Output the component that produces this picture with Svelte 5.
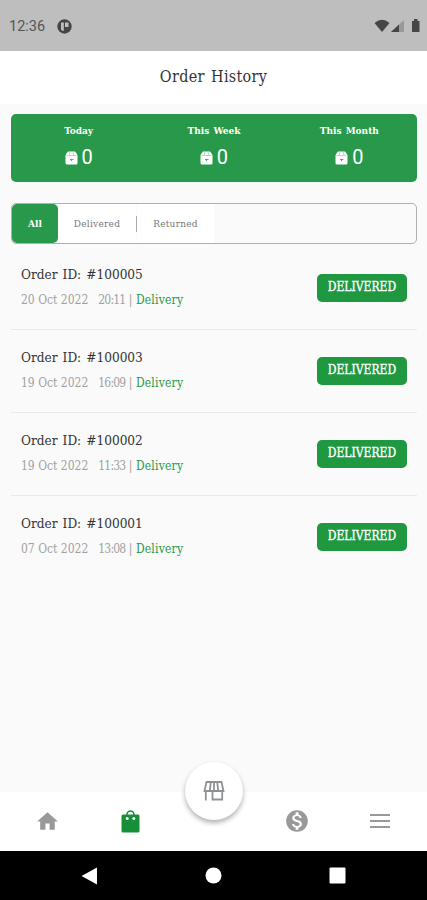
<script lang="ts">
	interface Order {
		id: number;
		date: string;
		time: string;
	}

	const stats = ['Today', 'This Week', 'This Month'];
	const filters = ['All', 'Delivered', 'Returned'];
	const orders: Order[] = [
		{ id: 100005, date: '20 Oct 2022', time: '20:11' },
		{ id: 100003, date: '19 Oct 2022', time: '16:09' },
		{ id: 100002, date: '19 Oct 2022', time: '11:33' },
		{ id: 100001, date: '07 Oct 2022', time: '13:08' }
	];

	let activeFilter = $state('All');
</script>

<div class="screen">
	<div class="statusBar">
		<span class="clock">12:36</span>
		<svg class="appDot" width="15" height="15" viewBox="0 0 15 15">
			<circle cx="7.5" cy="7.5" r="7.2" fill="#454545" />
			<path d="M4 3.5h2.800v8.500Q4.500 11.500 4 10.500zM8 3.500h3.500v4.500H8z" fill="#bebebe" />
		</svg>
		<svg class="signals" width="47" height="16" viewBox="0 0 47 16">
			<path d="M0.500 5Q8 -1.500 15.500 5L8 14z" fill="#464646" />
			<path d="M17 14L30 2v12z" fill="#999" />
			<path d="M17 14L25 6.500V14z" fill="#464646" />
			<path d="M38 3h2V1h3.500v2h2v11H38z" fill="#464646" />
		</svg>
	</div>

	<header><h1>Order History</h1></header>

	<main>
		<section class="summary">
			{#each stats as label}
				<div class="stat">
					<span class="statLabel">{label}</span>
					<div class="statValue">
						<svg width="13" height="14" viewBox="0 0 13 14">
							<path d="M3 .5h7Q11.500 2 12.500 4.500V12q0 1.500-1.500 1.500H2Q.5 13.500.5 12V4.500Q1.500 2 3 .5z" fill="#fff" />
							<path d="M4.800 1L4.300 4M8.200 1l.5 3M1.500 4.500h10" stroke="#28994a" stroke-width=".5" opacity=".7" />
							<path d="M5 8.500h3.500M6.500 8.500v1.500" stroke="#28994a" stroke-width=".8" />
						</svg>
						<span>0</span>
					</div>
				</div>
			{/each}
		</section>

		<div class="filters">
			{#each filters as name, i}
				{#if i === 2}<i class="divider"></i>{/if}
				<button class={name.toLowerCase()} class:active={activeFilter === name} onclick={() => (activeFilter = name)}>
					{name}
				</button>
			{/each}
		</div>

		<ul>
			{#each orders as order (order.id)}
				<li>
					<div>
						<div class="orderId">Order ID: #{order.id}</div>
						<div class="meta">
							<span class="date">{order.date}</span><span class="time">{order.time}</span> | <span class="type">Delivery</span>
						</div>
					</div>
					<span class="tag">DELIVERED</span>
				</li>
			{/each}
		</ul>
	</main>

	<nav>
		<button aria-label="Home">
			<svg width="25" height="25" viewBox="0 0 24 24" fill="#999"><path d="M10 20v-6h4v6h5v-8h3L12 3 2 12h3v8z" /></svg>
		</button>
		<button aria-label="Orders">
			<svg width="19" height="23" viewBox="0 0 19 23">
				<path d="M6 6V4.500a3.500 3.500 0 0 1 7 0V6" fill="none" stroke="#168f36" stroke-width="1.600" />
				<rect x=".5" y="4.500" width="18" height="18" rx="1.500" fill="#168f36" />
				<circle cx="6.200" cy="8.500" r="1.500" fill="#fff" />
				<circle cx="12.800" cy="8.500" r="1.500" fill="#fff" />
			</svg>
		</button>
		<div class="shopSlot">
			<button class="shop" aria-label="Shop">
				<svg width="22" height="20" viewBox="0 0 22 20" fill="none" stroke="#8f9294" stroke-width="1.800">
					<path d="M3.500 1h15l2 9h-19zM7.800 1L6.800 10M14.200 1l1 9M11 1v9M2.800 10v9.500M9.500 10v8.500h9.700V10M1 10h20" />
				</svg>
			</button>
		</div>
		<button aria-label="Wallet">
			<svg width="26" height="26" viewBox="0 0 24 24" fill="#999">
				<path d="M12 2C6.480 2 2 6.480 2 12s4.480 10 10 10 10-4.480 10-10S17.520 2 12 2zm1.410 16.090V20h-2.670v-1.930c-1.710-.36-3.160-1.460-3.270-3.400h1.960c.1 1.050.82 1.870 2.650 1.870 1.960 0 2.400-.98 2.400-1.590 0-.83-.44-1.610-2.670-2.140-2.480-.6-4.180-1.620-4.180-3.670 0-1.720 1.390-2.840 3.110-3.210V4h2.670v1.950c1.860.45 2.790 1.860 2.850 3.390H14.300c-.05-1.110-.64-1.870-2.220-1.870-1.500 0-2.400.68-2.400 1.640 0 .84.65 1.390 2.670 1.910s4.180 1.390 4.180 3.910c-.01 1.830-1.380 2.830-3.120 3.160z" />
			</svg>
		</button>
		<button aria-label="Menu">
			<svg width="20" height="14" viewBox="0 0 20 14" stroke="#999" stroke-width="2"><path d="M0 1h20M0 7h20M0 13h20" /></svg>
		</button>
	</nav>

	<div class="systemBar">
		<svg width="17" height="18" viewBox="0 0 17 18"><path d="M.5 9L16 .5v17z" fill="#fff" /></svg>
		<svg width="17" height="17" viewBox="0 0 17 17"><circle cx="8.500" cy="8.500" r="8" fill="#fff" /></svg>
		<svg width="17" height="17" viewBox="0 0 17 17"><rect x=".5" y=".5" width="16" height="16" rx="1" fill="#fff" /></svg>
	</div>
</div>

<style>
	:global(body) {
		background: #fafafa;
	}

	.screen {
		width: 427px;
		height: 900px;
		display: flex;
		flex-direction: column;
		overflow: hidden;
		background: #fafafa;
		color: #333;
		font-family: 'DejaVu Serif Condensed', 'DejaVu Serif', serif;
		font-stretch: condensed;
	}

	svg {
		display: block;
		flex: none;
	}

	button {
		border: none;
		padding: 0;
		background: none;
		font: inherit;
		letter-spacing: inherit;
		color: inherit;
	}

	.statusBar {
		height: 51px;
		flex: none;
		box-sizing: border-box;
		padding: 2px 6px 0 9px;
		display: flex;
		align-items: center;
		background: #bebebe;
		color: #555;
	}

	.clock {
		width: 48px;
		font: 14.5px/20px Roboto, sans-serif;
	}

	.signals {
		margin: -2px 0 0 auto;
	}

	header {
		height: 53px;
		flex: none;
		background: #fff;
	}

	h1 {
		margin: 0;
		font-size: 16px;
		line-height: 51px;
		font-weight: 400;
		letter-spacing: 0.3px;
		word-spacing: 1.5px;
		text-align: center;
	}

	main {
		flex: 1;
		padding: 10px 10px 0 11px;
	}

	.summary {
		height: 68px;
		display: grid;
		grid-template-columns: repeat(3, 1fr);
		border-radius: 5px;
		background: #28994a;
		color: #fff;
	}

	.stat {
		display: flex;
		flex-direction: column;
		align-items: center;
		padding-top: 10px;
	}

	.statLabel {
		font-size: 10px;
		line-height: 14px;
		font-weight: 700;
		word-spacing: 1px;
	}

	.statValue {
		display: flex;
		align-items: center;
		gap: 4px;
		margin-top: 7px;
		font: 20px/24px Roboto, sans-serif;
	}

	.statValue svg {
		margin-top: 2px;
	}

	.filters {
		height: 41px;
		box-sizing: border-box;
		margin-top: 21px;
		display: flex;
		align-items: center;
		border: 1px solid #b0b0b0;
		border-radius: 5px;
		font-size: 10px;
		letter-spacing: 0.25px;
		color: #777;
	}

	.filters button {
		height: 39px;
		padding-bottom: 1px;
		background: #fff;
	}

	.filters .all {
		width: 46px;
		border-radius: 5px;
	}

	.filters .delivered {
		width: 78px;
	}

	.filters .returned {
		width: 77px;
	}

	.filters .active {
		background: #28994a;
		color: #fff;
		font-weight: 700;
		letter-spacing: 0;
	}

	.divider {
		width: 1px;
		height: 16px;
		background: #aaa;
	}

	ul {
		margin: 3px 0 0;
		padding: 0;
		list-style: none;
	}

	li {
		height: 83px;
		box-sizing: border-box;
		padding: 0 10px;
		display: flex;
		align-items: center;
		justify-content: space-between;
		border-bottom: 1px solid #e9e9e9;
	}

	li:last-child {
		border-color: transparent;
	}

	.orderId {
		margin-top: -3px;
		font-size: 13.5px;
		line-height: 20px;
		word-spacing: 1.2px;
		white-space: nowrap;
	}

	.meta {
		margin-top: 7px;
		font-size: 12px;
		line-height: 18px;
		color: #a0a0a0;
		white-space: nowrap;
	}

	.time {
		margin-left: 10px;
		letter-spacing: -0.8px;
	}

	.type {
		color: #28994a;
		letter-spacing: 0.2px;
	}

	.tag {
		width: 90px;
		height: 28px;
		border-radius: 5px;
		background: #1f983f;
		color: #fff;
		font-size: 12px;
		line-height: 27px;
		text-align: center;
		-webkit-text-stroke: 0.3px #fff;
	}

	nav {
		height: 59px;
		flex: none;
		box-sizing: border-box;
		padding: 0 5px 1px 6px;
		display: grid;
		grid-template-columns: repeat(5, 1fr);
		background: #fff;
	}

	nav button {
		display: flex;
		align-items: center;
		justify-content: center;
	}

	.shopSlot {
		display: flex;
		justify-content: center;
	}

	.shop {
		width: 58px;
		height: 58px;
		margin-top: -30px;
		border-radius: 50%;
		background: #fff;
		box-shadow: 0 3px 5px rgba(0, 0, 0, 0.3);
	}

	.systemBar {
		height: 49px;
		flex: none;
		box-sizing: border-box;
		padding: 0 81px;
		display: flex;
		align-items: center;
		justify-content: space-between;
		background: #000;
	}
</style>
